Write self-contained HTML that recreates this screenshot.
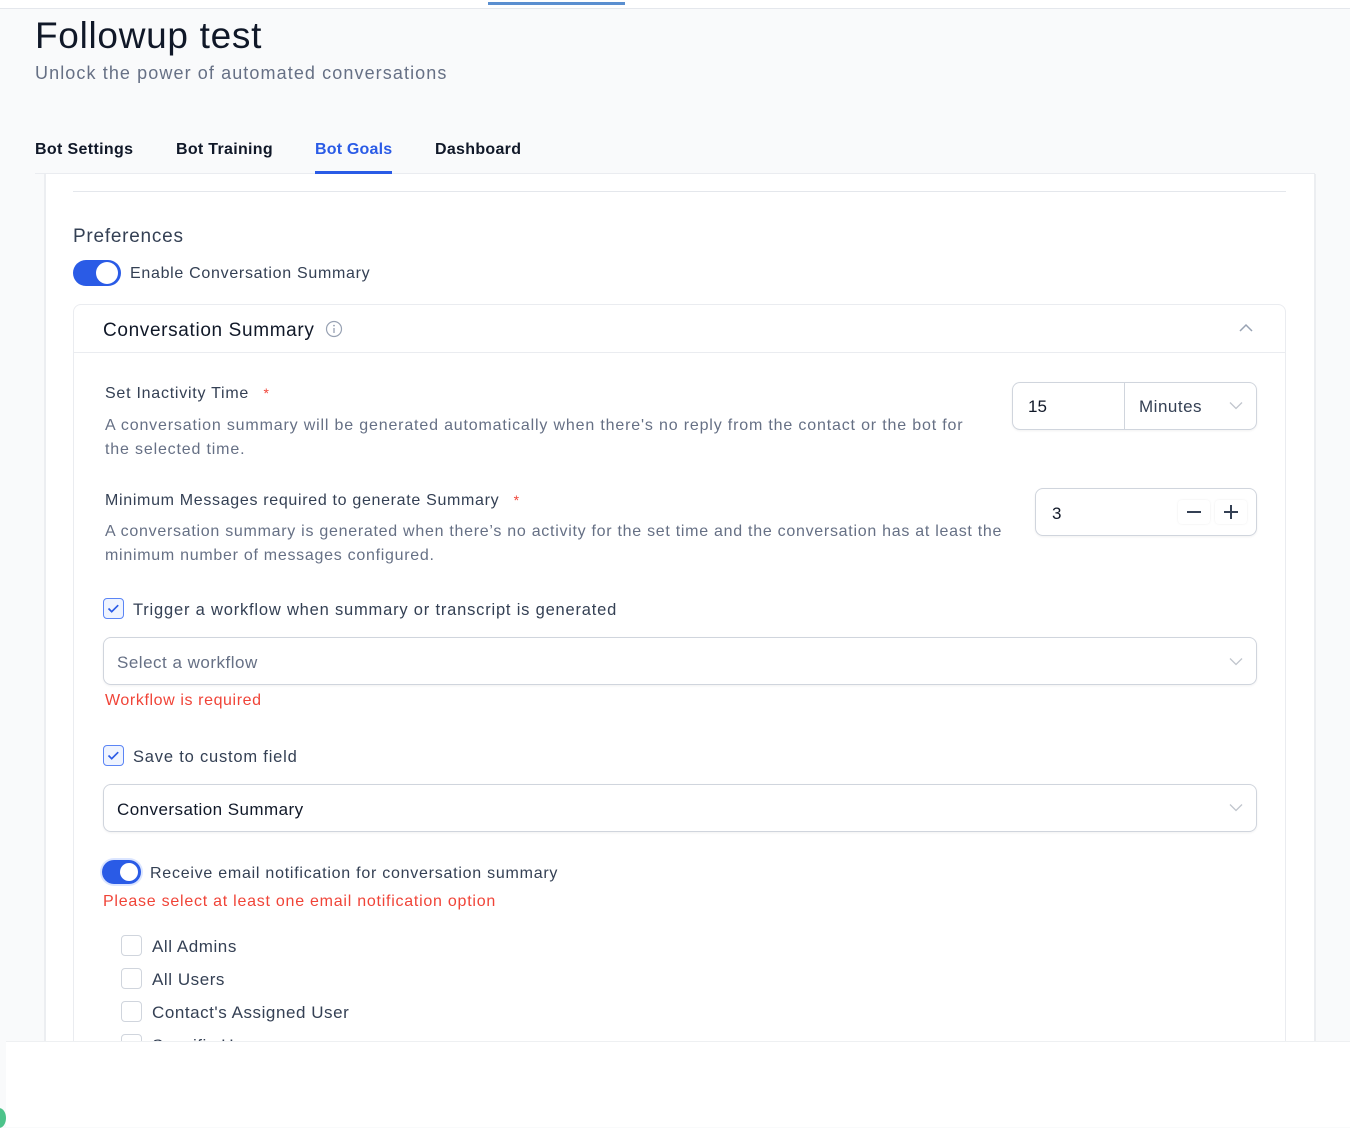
<!DOCTYPE html>
<html><head><meta charset="utf-8">
<style>
*{box-sizing:border-box;margin:0;padding:0}
body{width:1350px;height:1127px;background:#f9fafb;font-family:"Liberation Sans",sans-serif;position:relative;overflow:hidden;color:#101828}
.a{position:absolute;white-space:nowrap}
.desc{color:#667085;font-size:16px;letter-spacing:.83px;line-height:24px}
.lab{font-size:16px;color:#344054;letter-spacing:.75px}
.star{color:#f04438;font-size:14px}
.box{position:absolute;background:#fff;border:1px solid #d0d5dd;border-radius:8px;box-shadow:0 1px 2px rgba(16,24,40,.06)}
.cb{position:absolute;width:21px;height:21px;border-radius:4px;border:1px solid #d0d5dd;background:#fff}
.cb.on{background:#eff4ff;border-color:#5b85f5}
.err{color:#f04438;font-size:16px;letter-spacing:.75px}
.it{font-size:17px;color:#344054;letter-spacing:.55px}
</style></head><body>
<div class="a" style="left:0;top:0;width:1350px;height:9px;background:#fff;border-bottom:1px solid #e4e7ec"></div>
<div class="a" style="left:488px;top:2px;width:137px;height:3px;background:#5a8fd0"></div>
<div class="a" style="left:35px;top:15px;font-size:37px;color:#101828;letter-spacing:.7px">Followup test</div>
<div class="a" style="left:35px;top:63px;font-size:18px;color:#667085;letter-spacing:1.1px">Unlock the power of automated conversations</div>
<div class="a" style="left:35px;top:141px;font-size:16px;font-weight:bold;color:#101828;letter-spacing:.35px">Bot Settings</div>
<div class="a" style="left:176px;top:141px;font-size:16px;font-weight:bold;color:#101828;letter-spacing:.3px">Bot Training</div>
<div class="a" style="left:315px;top:141px;font-size:16px;font-weight:bold;color:#2a5be6;letter-spacing:.2px">Bot Goals</div>
<div class="a" style="left:435px;top:141px;font-size:16px;font-weight:bold;color:#101828;letter-spacing:.3px">Dashboard</div>
<div class="a" style="left:35px;top:173px;width:1280px;height:1px;background:#eaecf0"></div>
<div class="a" style="left:315px;top:171px;width:77px;height:3px;background:#2a5be6"></div>
<div class="a" style="left:44px;top:174px;width:1272px;height:868px;background:#fff;border-left:2px solid #eceef1;border-right:2px solid #eceef1"></div>
<div class="a" style="left:73px;top:191px;width:1213px;height:1px;background:#e4e7ec"></div>
<div class="a" style="left:73px;top:226px;font-size:19px;color:#344054;letter-spacing:.75px">Preferences</div>
<div class="a" style="left:73px;top:260px;width:48px;height:26px;border-radius:13px;background:#2a5be6"></div>
<div class="a" style="left:96px;top:262px;width:22px;height:22px;border-radius:11px;background:#fff"></div>
<div class="a" style="left:130px;top:265px;font-size:16px;color:#344054;letter-spacing:.7px">Enable Conversation Summary</div>
<div class="a" style="left:73px;top:304px;width:1213px;height:760px;border:1px solid #eaecf0;border-radius:8px;background:#fff"></div>
<div class="a" style="left:74px;top:352px;width:1211px;height:1px;background:#eaecf0"></div>
<div class="a" style="left:103px;top:320px;font-size:19px;color:#101828;letter-spacing:.65px">Conversation Summary</div>
<svg class="a" style="left:325px;top:320px" width="18" height="18" viewBox="0 0 18 18"><circle cx="9" cy="9" r="7.5" fill="none" stroke="#98a2b3" stroke-width="1.2"/><path d="M9 8v5" stroke="#98a2b3" stroke-width="1.3"/><circle cx="9" cy="5.6" r=".9" fill="#98a2b3"/></svg>
<svg class="a" style="left:1238px;top:323px" width="16" height="10" viewBox="0 0 16 10"><path d="M2 8l6-6 6 6" fill="none" stroke="#98a2b3" stroke-width="1.5"/></svg>
<div class="a lab" style="left:105px;top:385px">Set Inactivity Time <span class="star">&nbsp;&nbsp;*</span></div>
<div class="a desc" style="left:105px;top:414px">A conversation summary will be generated automatically when there's no reply from the contact or the bot for<br>the selected time.</div>
<div class="box" style="left:1012px;top:382px;width:245px;height:48px"></div>
<div class="a" style="left:1124px;top:383px;width:1px;height:46px;background:#d0d5dd"></div>
<div class="a" style="left:1028px;top:397px;font-size:17px;color:#101828">15</div>
<div class="a" style="left:1139px;top:397px;font-size:17px;color:#344054;letter-spacing:.5px">Minutes</div>
<svg class="a" style="left:1229px;top:401px" width="14" height="9" viewBox="0 0 14 9"><path d="M1 1.5l6 6 6-6" fill="none" stroke="#c0c5cd" stroke-width="1.3"/></svg>
<div class="a lab" style="left:105px;top:492px;letter-spacing:.68px">Minimum Messages required to generate Summary <span class="star">&nbsp;&nbsp;*</span></div>
<div class="a desc" style="left:105px;top:520px;letter-spacing:.72px">A conversation summary is generated when there’s no activity for the set time and the conversation has at least the<br>minimum number of messages configured.</div>
<div class="box" style="left:1035px;top:488px;width:222px;height:48px"></div>
<div class="a" style="left:1052px;top:504px;font-size:17px;color:#101828">3</div>
<div class="a" style="left:1178px;top:500px;width:32px;height:24px;border-radius:4px;box-shadow:0 0 2px rgba(0,0,0,.08)"></div>
<div class="a" style="left:1215px;top:500px;width:32px;height:24px;border-radius:4px;box-shadow:0 0 2px rgba(0,0,0,.08)"></div>
<div class="a" style="left:1187px;top:511px;width:14px;height:1.5px;background:#344054"></div>
<div class="a" style="left:1224px;top:511px;width:14px;height:1.5px;background:#344054"></div>
<div class="a" style="left:1230.2px;top:505px;width:1.5px;height:14px;background:#344054"></div>
<div class="cb on" style="left:103px;top:598px"><svg width="19" height="19" viewBox="0 0 19 19"><path d="M4.5 9.5l3.2 3.2 6.5-6.5" fill="none" stroke="#2a5be6" stroke-width="1.7"/></svg></div>
<div class="a lab" style="left:133px;top:601px;font-size:16.5px;letter-spacing:.8px">Trigger a workflow when summary or transcript is generated</div>
<div class="box" style="left:103px;top:637px;width:1154px;height:48px"></div>
<div class="a" style="left:117px;top:653px;font-size:17px;color:#667085;letter-spacing:.5px">Select a workflow</div>
<svg class="a" style="left:1229px;top:657px" width="14" height="9" viewBox="0 0 14 9"><path d="M1 1.5l6 6 6-6" fill="none" stroke="#c0c5cd" stroke-width="1.3"/></svg>
<div class="a err" style="left:105px;top:692px;letter-spacing:.6px">Workflow is required</div>
<div class="cb on" style="left:103px;top:745px"><svg width="19" height="19" viewBox="0 0 19 19"><path d="M4.5 9.5l3.2 3.2 6.5-6.5" fill="none" stroke="#2a5be6" stroke-width="1.7"/></svg></div>
<div class="a lab" style="left:133px;top:748px;font-size:16.5px;letter-spacing:.8px">Save to custom field</div>
<div class="box" style="left:103px;top:784px;width:1154px;height:48px"></div>
<div class="a" style="left:117px;top:800px;font-size:17px;color:#101828;letter-spacing:.45px">Conversation Summary</div>
<svg class="a" style="left:1229px;top:803px" width="14" height="9" viewBox="0 0 14 9"><path d="M1 1.5l6 6 6-6" fill="none" stroke="#c0c5cd" stroke-width="1.3"/></svg>
<div class="a" style="left:102px;top:860px;width:39px;height:24px;border-radius:12px;background:#2a5be6;box-shadow:0 0 0 2px #dbe5ff"></div>
<div class="a" style="left:120px;top:863px;width:18px;height:18px;border-radius:9px;background:#fff"></div>
<div class="a lab" style="left:150px;top:865px">Receive email notification for conversation summary</div>
<div class="a err" style="left:103px;top:893px">Please select at least one email notification option</div>
<div class="cb" style="left:121px;top:935px"></div>
<div class="a it" style="left:152px;top:937px">All Admins</div>
<div class="cb" style="left:121px;top:968px"></div>
<div class="a it" style="left:152px;top:970px">All Users</div>
<div class="cb" style="left:121px;top:1001px"></div>
<div class="a it" style="left:152px;top:1003px">Contact's Assigned User</div>
<div class="cb" style="left:121px;top:1034px"></div>
<div class="a it" style="left:152px;top:1036px">Specific User</div>
<div class="a" style="left:6px;top:1041px;width:1344px;height:86px;background:#fff;border-top:1px solid #eef0f2"></div>
<div class="a" style="left:-8px;top:1108px;width:14px;height:20px;border-radius:50%;background:#4cc38a"></div>
</body></html>
